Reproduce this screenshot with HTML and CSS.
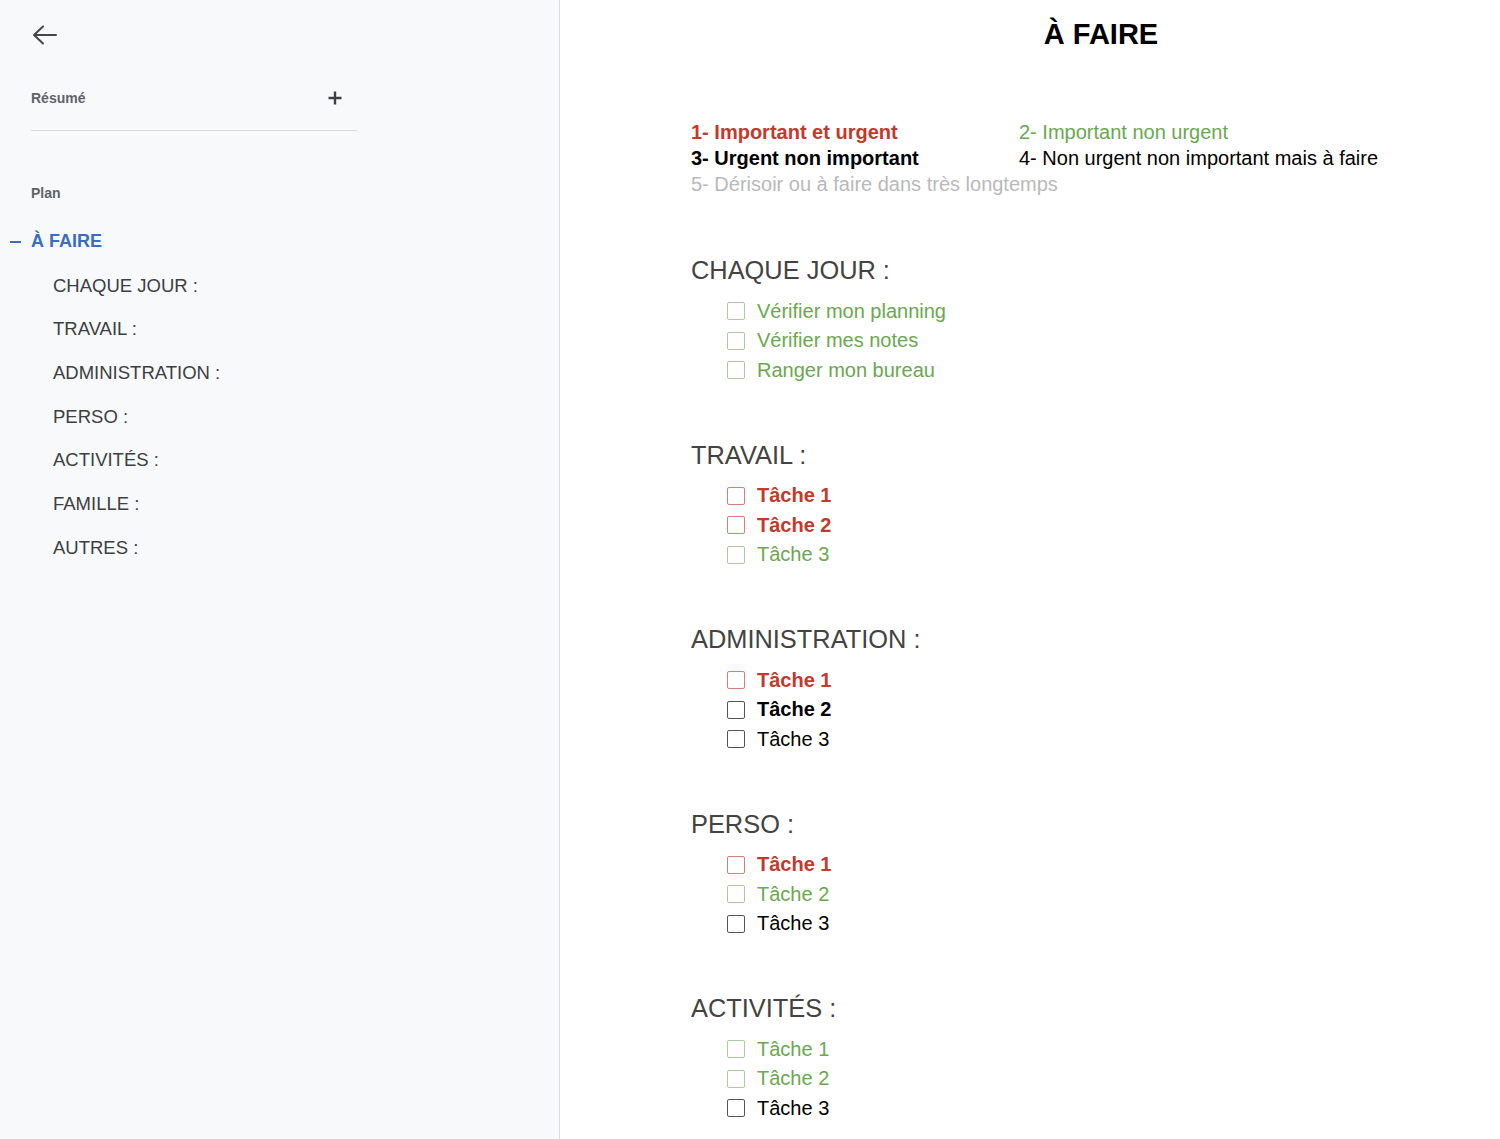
FILE: index.html
```html
<!DOCTYPE html>
<html lang="fr">
<head>
  <meta charset="utf-8">
  <meta name="viewport" content="width=device-width, initial-scale=1">
  <title>À FAIRE</title>
  <link rel="stylesheet" href="styles.css">
</head>
<body>
  <div class="app">
    <aside class="sidebar">
      <div class="back">
        <svg width="26" height="24" viewBox="0 0 26 24" aria-hidden="true">
          <path d="M2 12H24M11 3.5L2 12L11 20.5" fill="none" stroke="#444746" stroke-width="2" stroke-linecap="round" stroke-linejoin="round"/>
        </svg>
      </div>
      <div class="summary">
        <span>Résumé</span>
        <svg width="16" height="16" viewBox="0 0 16 16" aria-hidden="true">
          <path d="M8 1.5V14.5M1.5 8H14.5" stroke="#3c4043" stroke-width="2.4"/>
        </svg>
      </div>
      <div class="plan-label">Plan</div>
      <ul class="outline">
        <li class="active"><span class="dash"></span>À FAIRE</li>
        <li class="sub">CHAQUE JOUR :</li>
        <li class="sub">TRAVAIL :</li>
        <li class="sub">ADMINISTRATION :</li>
        <li class="sub">PERSO :</li>
        <li class="sub">ACTIVITÉS :</li>
        <li class="sub">FAMILLE :</li>
        <li class="sub">AUTRES :</li>
      </ul>
    </aside>

    <main class="doc">
      <div class="page">
        <h1 class="title">À FAIRE</h1>

        <div class="legend">
          <div class="red bold">1- Important et urgent</div>
          <div class="green">2- Important non urgent</div>
          <div class="black bold">3- Urgent non important</div>
          <div class="black">4- Non urgent non important mais à faire</div>
          <div class="grey span">5- Dérisoir ou à faire dans très longtemps</div>
        </div>

        <section class="section">
          <h2>CHAQUE JOUR :</h2>
          <ul class="tasks">
            <li class="green"><span class="box"></span>Vérifier mon planning</li>
            <li class="green"><span class="box"></span>Vérifier mes notes</li>
            <li class="green"><span class="box"></span>Ranger mon bureau</li>
          </ul>
        </section>

        <section class="section">
          <h2>TRAVAIL :</h2>
          <ul class="tasks">
            <li class="red bold"><span class="box"></span>Tâche 1</li>
            <li class="red bold"><span class="box"></span>Tâche 2</li>
            <li class="green"><span class="box"></span>Tâche 3</li>
          </ul>
        </section>

        <section class="section">
          <h2>ADMINISTRATION :</h2>
          <ul class="tasks">
            <li class="red bold"><span class="box"></span>Tâche 1</li>
            <li class="black bold"><span class="box"></span>Tâche 2</li>
            <li class="black"><span class="box"></span>Tâche 3</li>
          </ul>
        </section>

        <section class="section">
          <h2>PERSO :</h2>
          <ul class="tasks">
            <li class="red bold"><span class="box"></span>Tâche 1</li>
            <li class="green"><span class="box"></span>Tâche 2</li>
            <li class="black"><span class="box"></span>Tâche 3</li>
          </ul>
        </section>

        <section class="section">
          <h2>ACTIVITÉS :</h2>
          <ul class="tasks">
            <li class="green"><span class="box"></span>Tâche 1</li>
            <li class="green"><span class="box"></span>Tâche 2</li>
            <li class="black"><span class="box"></span>Tâche 3</li>
          </ul>
        </section>
      </div>
    </main>
  </div>
</body>
</html>
```

FILE: styles.css
```css
:root {
  --sidebar-bg: #f8f9fb;
  --line: #dadce0;
  --side-text: #3c4043;
  --side-muted: #5f6368;
  --blue: #3b6cc2;
  --red: #c3392b;
  --red-box: #d27f76;
  --green: #6aa84f;
  --green-box: #abcb9d;
  --grey: #b9b9b9;
  --heading: #434343;
}
/* reset */
*, *::before, *::after {
  box-sizing: border-box;
  margin: 0;
  padding: 0;
}
html, body {
  width: 100%;
  height: 100%;
  overflow: hidden;
  font-family: "Liberation Sans", Arial, sans-serif;
  background: #fff;
}
ul { list-style: none; }

.app {
  display: flex;
  height: 1139px;
}

/* sidebar */
.sidebar {
  width: 560px;
  flex-shrink: 0;
  background: var(--sidebar-bg);
  border-right: 1px solid var(--line);
}
.back {
  padding: 23px 0 0 32px;
  height: 47px;
}
.back svg { display: block; }
.summary {
  display: flex;
  justify-content: space-between;
  align-items: center;
  width: 326px;
  margin: 41px 0 0 31px;
  height: 43px;
  padding-bottom: 23px;
  line-height: 20px;
  border-bottom: 1px solid var(--line);
  font-size: 14px;
  font-weight: 700;
  color: var(--side-muted);
}
.summary svg { margin-right: 14px; }
.plan-label {
  margin: 52px 0 0 31px;
  line-height: 20px;
  font-size: 14px;
  font-weight: 700;
  color: var(--side-muted);
}
.outline {
  margin-top: 17px;
}
.outline li {
  height: 43.7px;
  line-height: 43.7px;
  font-size: 18.5px;
  color: var(--side-text);
}
.outline .sub { padding-left: 53px; }
.outline .active {
  display: flex;
  align-items: center;
  padding-left: 10px;
  font-size: 18px;
  font-weight: 700;
  color: var(--blue);
}
.dash {
  width: 11px;
  height: 2px;
  background: var(--blue);
  margin-right: 10px;
}

/* document */
.doc {
  flex: 1;
  overflow: hidden;
  padding: 16px 0 0 131px;
}
.page {
  width: 820px;
}
.title {
  text-align: center;
  font-size: 29px;
  line-height: 36px;
  font-weight: 700;
  color: #000;
}
.legend {
  display: grid;
  grid-template-columns: 328px 1fr;
  margin-top: 67px;
  font-size: 20px;
  line-height: 26px;
  white-space: nowrap;
}
.legend .span { grid-column: 1 / -1; }

.red { color: var(--red); }
.green { color: var(--green); }
.black { color: #000; }
.grey { color: var(--grey); }
.bold { font-weight: 700; }

.section {
  margin-top: 57px;
}
.section + .section { margin-top: 53.75px; }
.section h2 {
  font-size: 25.4px;
  line-height: 32px;
  font-weight: 400;
  color: var(--heading);
  margin-bottom: 10.25px;
}
.tasks {
  padding-left: 36px;
}
.tasks li {
  display: flex;
  align-items: center;
  height: 29.5px;
  font-size: 20px;
}
.box {
  width: 18px;
  height: 18px;
  border: 1.7px solid #555;
  border-radius: 2px;
  margin-right: 12px;
  flex-shrink: 0;
}
.tasks li.red .box { border-color: var(--red-box); }
.tasks li.green .box { border-color: var(--green-box); }
.tasks li.black .box { border-color: #555; }
```
